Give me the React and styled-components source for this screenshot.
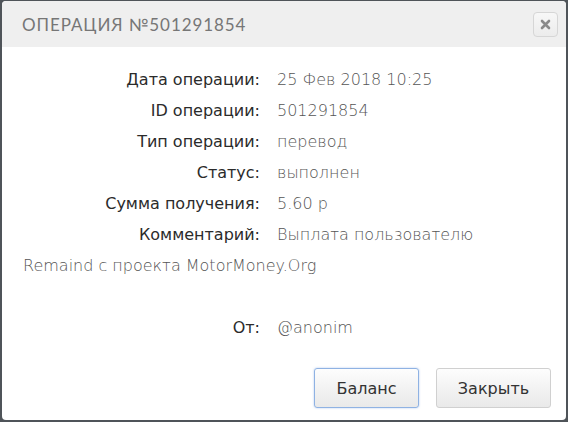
import styled, { createGlobalStyle } from 'styled-components';

const GlobalStyle = createGlobalStyle`
    html, body {
        margin: 0;
        padding: 0;
        background: #4f5459;
    }
    body {
        font-family: 'DejaVu Sans', 'Liberation Sans', sans-serif;
    }
`;

const Dialog = styled.div`
    width: 564px;
    height: 419px;
    margin: 1px 2px 0 2px;
    background: #fff;
    border-radius: 4px;
    overflow: hidden;
    display: flex;
    flex-direction: column;
`;

const Header = styled.div`
    height: 46px;
    background: #efefef;
    display: flex;
    align-items: center;
    justify-content: space-between;
    padding: 0 8px 0 20px;
`;

const Title = styled.h2`
    margin: 0;
    font-family: Lato, 'Liberation Sans', sans-serif;
    font-size: 17px;
    font-weight: 400;
    letter-spacing: 0.9px;
    color: #767676;
    text-transform: uppercase;
`;

const CloseButton = styled.button`
    width: 25px;
    height: 25px;
    padding: 0;
    border: 1px solid #d6d6d6;
    border-radius: 4px;
    background: linear-gradient(#f7f7f7, #ececec);
    display: flex;
    align-items: center;
    justify-content: center;
    cursor: pointer;
`;

const Body = styled.div`
    padding: 17px 21px 0 21px;
    font-size: 16px;
    line-height: 31px;
`;

const Row = styled.div`
    min-height: 31px;
`;

const Label = styled.span`
    display: inline-block;
    width: 237px;
    margin-right: 17px;
    text-align: right;
    color: #2b2b2b;
`;

const Value = styled.span`
    color: #555;
    font-weight: 200;
`;

const Footer = styled.div`
    display: flex;
    justify-content: flex-end;
    gap: 17px;
    padding: 25px 15px 0 0;
`;

const Button = styled.button`
    width: ${({ $w }) => $w}px;
    height: 40px;
    padding: 0;
    font-family: 'DejaVu Sans', sans-serif;
    font-size: 16px;
    color: #333;
    border-radius: 3px;
    border: 1px solid ${({ $focused }) => ($focused ? '#8fb2e3' : '#d0d0d0')};
    background: linear-gradient(#fdfdfd, #e9e9e9);
    box-shadow: ${({ $focused }) => ($focused ? '0 0 2px rgba(90, 140, 220, 0.5)' : 'none')};
    cursor: pointer;
`;

const rows = [
    ['Дата операции:', '25 Фев 2018 10:25'],
    ['ID операции:', '501291854'],
    ['Тип операции:', 'перевод'],
    ['Статус:', 'выполнен'],
    ['Сумма получения:', '5.60 р'],
    ['Комментарий:', 'Выплата пользователю Remaind с проекта MotorMoney.Org'],
];

const App = () => (
    <>
        <GlobalStyle />
        <Dialog>
            <Header>
                <Title>Операция №501291854</Title>
                <CloseButton aria-label='Закрыть'>
                    <svg width='11' height='11' viewBox='0 0 11 11'>
                        <path
                            d='M2 2 L9 9 M9 2 L2 9'
                            stroke='#8a8a8a'
                            strokeWidth='2.6'
                            strokeLinecap='round'
                        />
                    </svg>
                </CloseButton>
            </Header>
            <Body>
                {rows.map(([label, value]) => (
                    <Row key={label}>
                        <Label>{label}</Label>
                        <Value>{value}</Value>
                    </Row>
                ))}
                <Row />
                <Row>
                    <Label>От:</Label>
                    <Value>@anonim</Value>
                </Row>
            </Body>
            <Footer>
                <Button $focused $w={105}>Баланс</Button>
                <Button $w={115}>Закрыть</Button>
            </Footer>
        </Dialog>
    </>
);

export default App;
